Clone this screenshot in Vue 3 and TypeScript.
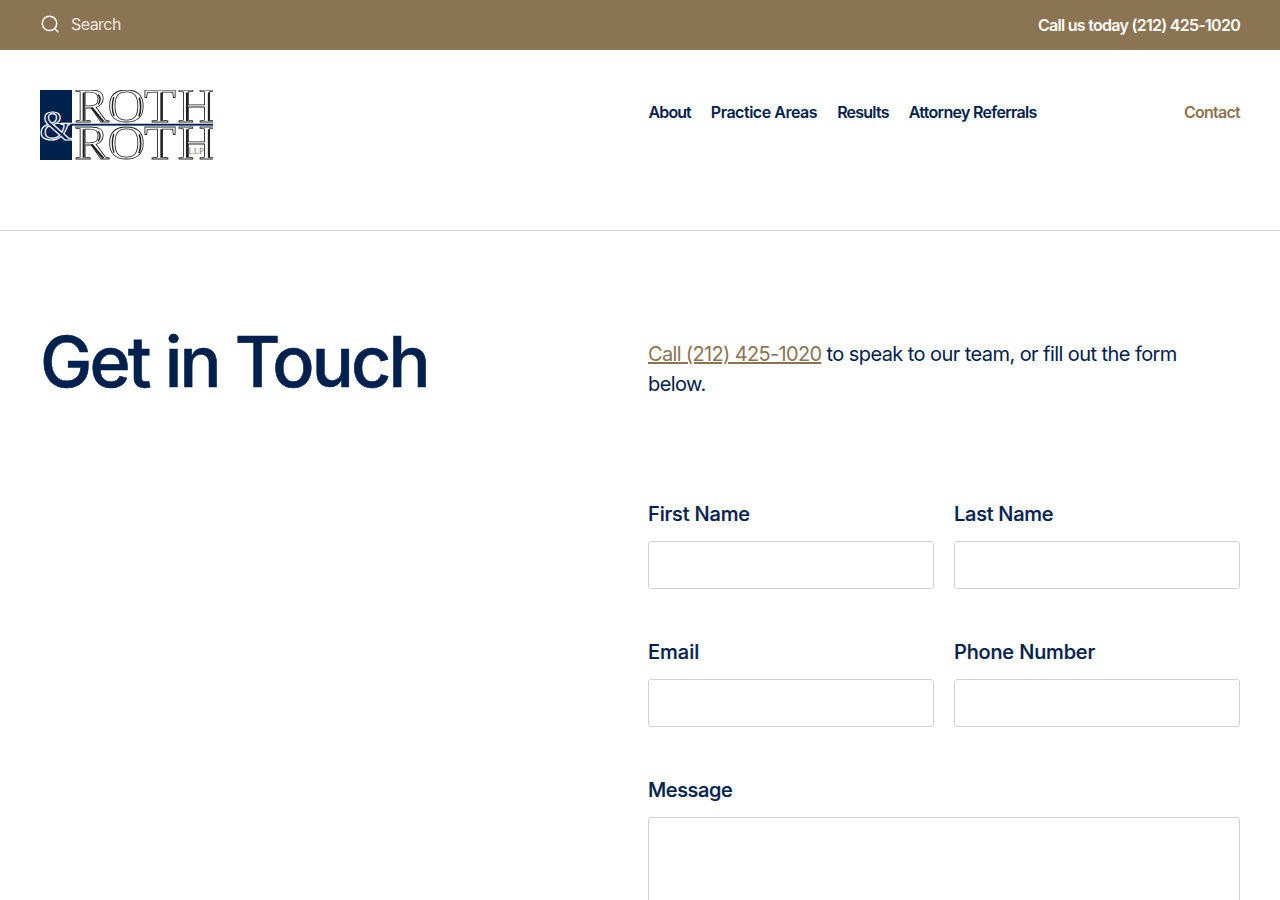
<script setup lang="ts">
interface Link { label: string; cls: string }
interface Field { label: string; type: string; cls: string }

const links: Link[] = [
  { label: 'About', cls: 'n1' },
  { label: 'Practice Areas', cls: 'n2' },
  { label: 'Results', cls: 'n3' },
  { label: 'Attorney Referrals', cls: 'n4' },
]
const fields: Field[] = [
  { label: 'First Name', type: 'text', cls: 'l1' },
  { label: 'Last Name', type: 'text', cls: 'l2' },
  { label: 'Email', type: 'email', cls: 'l3' },
  { label: 'Phone Number', type: 'tel', cls: 'l4' },
]
const rows: number[] = [0, 36.8]
</script>

<template>
  <div class="page">
    <div class="topbar">
      <div class="search">
        <svg width="20" height="20" viewBox="0 0 20 20" fill="none" stroke="#fff" stroke-width="1.5">
          <circle cx="9.5" cy="9.4" r="7.2" />
          <path d="M14.6 14.5L18.3 18.2" />
        </svg>
        <span>Search</span>
      </div>
      <a class="phone">Call us today (212) 425-1020</a>
    </div>
    <header class="header">
      <svg class="logo" width="173" height="70" viewBox="40 90 173 70">
        <rect x="40" y="90" width="32" height="70" fill="#00204d" />
        <g v-for="dy in rows" :key="dy" :transform="`translate(0 ${dy})`">
          <text class="serif" transform="translate(40 0) scale(1.08 1)" x="31.7 62.6 96.2 127.4" y="122.3" font-size="48.5" fill="#fff" stroke="#222" stroke-width="0.8">ROTH</text>
          <g fill="none" stroke="#222" stroke-width="2.1">
            <path d="M83.7 92.5V121M161.4 92.5V121M187 92.5V121M208.9 92.5V121" />
            <path d="M91.5 107.5L103.3 121.5" />
            <path d="M98.2 94.5Q102 99 98.2 104.5" stroke-width="1.4" />
            <path d="M113.8 97Q110.8 107 114 116" stroke-width="1.4" />
            <path d="M139.3 97.5Q142.2 107 139 116.5" stroke-width="1.6" />
          </g>
        </g>
        <text class="serif" x="39.4" y="139.9" fill="#00204d" stroke="#fff" stroke-width="1.2" font-size="42.5">&amp;</text>
        <path d="M57 123.5H72" stroke="#fff" stroke-width="0.9" />
        <rect x="72" y="123" width="142" height="3.2" fill="#b7c3d5" />
        <rect x="70" y="124" width="144" height="1.5" fill="#00204d" />
        <text class="serif" x="188.5" y="154" fill="#777" font-size="8.5">LLP</text>
      </svg>
      <nav class="nav">
        <a v-for="l in links" :key="l.label" :class="l.cls">{{ l.label }}</a>
      </nav>
      <a class="contact">Contact</a>
    </header>
    <main class="main">
      <h1>Get in Touch</h1>
      <div class="right">
        <p class="intro"><a>Call (212) 425-1020</a> to speak to our team, or fill out the form below.</p>
        <form class="form">
          <label v-for="f in fields" :key="f.label" class="field">
            <span :class="f.cls">{{ f.label }}</span>
            <input :type="f.type">
          </label>
          <label class="field wide"><span class="l5">Message</span><textarea></textarea></label>
        </form>
      </div>
    </main>
  </div>
</template>

<style>
html, body { overflow: hidden; }
</style>
<style scoped>
.page { width: 1280px; height: 900px; overflow: hidden; background: #fff; color: #00204d; font-family: Inter, "Liberation Sans", sans-serif; }
.topbar { height: 50px; padding: 0 40px; box-sizing: border-box; background: #8b7453; color: #fff; display: flex; justify-content: space-between; align-items: center; font-size: 16px; }
.search { display: flex; align-items: center; gap: 11px; color: #eee9df; letter-spacing: -0.55px; padding-bottom: 2px; }
.phone { font-weight: 600; letter-spacing: -0.72px; }
.header { height: 181px; box-sizing: border-box; border-bottom: 1px solid #d2d2d2; padding: 40px 40px 0; display: grid; grid-template-columns: 608.6px 1fr auto; align-items: start; }
.serif { font-family: "Liberation Serif", serif; }
.nav { display: flex; gap: 20px; white-space: nowrap; }
.nav, .contact { padding-top: 12px; line-height: 20px; font-size: 16px; font-weight: 600; }
.n1 { letter-spacing: -0.92px; }
.n2 { letter-spacing: -0.47px; }
.n3 { letter-spacing: -0.78px; }
.n4 { letter-spacing: -0.69px; }
.contact { color: #8b7453; letter-spacing: -0.74px; }
.main { display: grid; grid-template-columns: 608px 592px; padding: 0 40px; }
h1 { margin: 90px 0 0; font-size: 70px; line-height: 82px; font-weight: 500; letter-spacing: -2.8px; -webkit-text-stroke: 0.6px #00204d; }
.intro { width: 560px; margin: 108px 0 0; font-size: 20px; line-height: 30px; letter-spacing: -0.57px; }
.intro a { color: #8b7453; text-decoration: underline; letter-spacing: -0.66px; }
.form { margin-top: 100px; display: grid; grid-template-columns: 1fr 1fr; gap: 48px 20px; }
.field { display: flex; flex-direction: column; font-size: 20px; font-weight: 500; line-height: 30px; gap: 12px; }
.field span { align-self: flex-start; -webkit-text-stroke: 0.2px #00204d; }
.l1, .l4 { letter-spacing: -0.15px; }
.l2 { letter-spacing: -0.25px; }
.l5 { letter-spacing: -0.4px; }
.wide { grid-column: 1 / -1; }
input, textarea { box-sizing: border-box; width: 100%; height: 48px; border: 1px solid #d2d2d2; border-radius: 3px; background: #fff; }
textarea { height: 200px; resize: none; }
</style>
